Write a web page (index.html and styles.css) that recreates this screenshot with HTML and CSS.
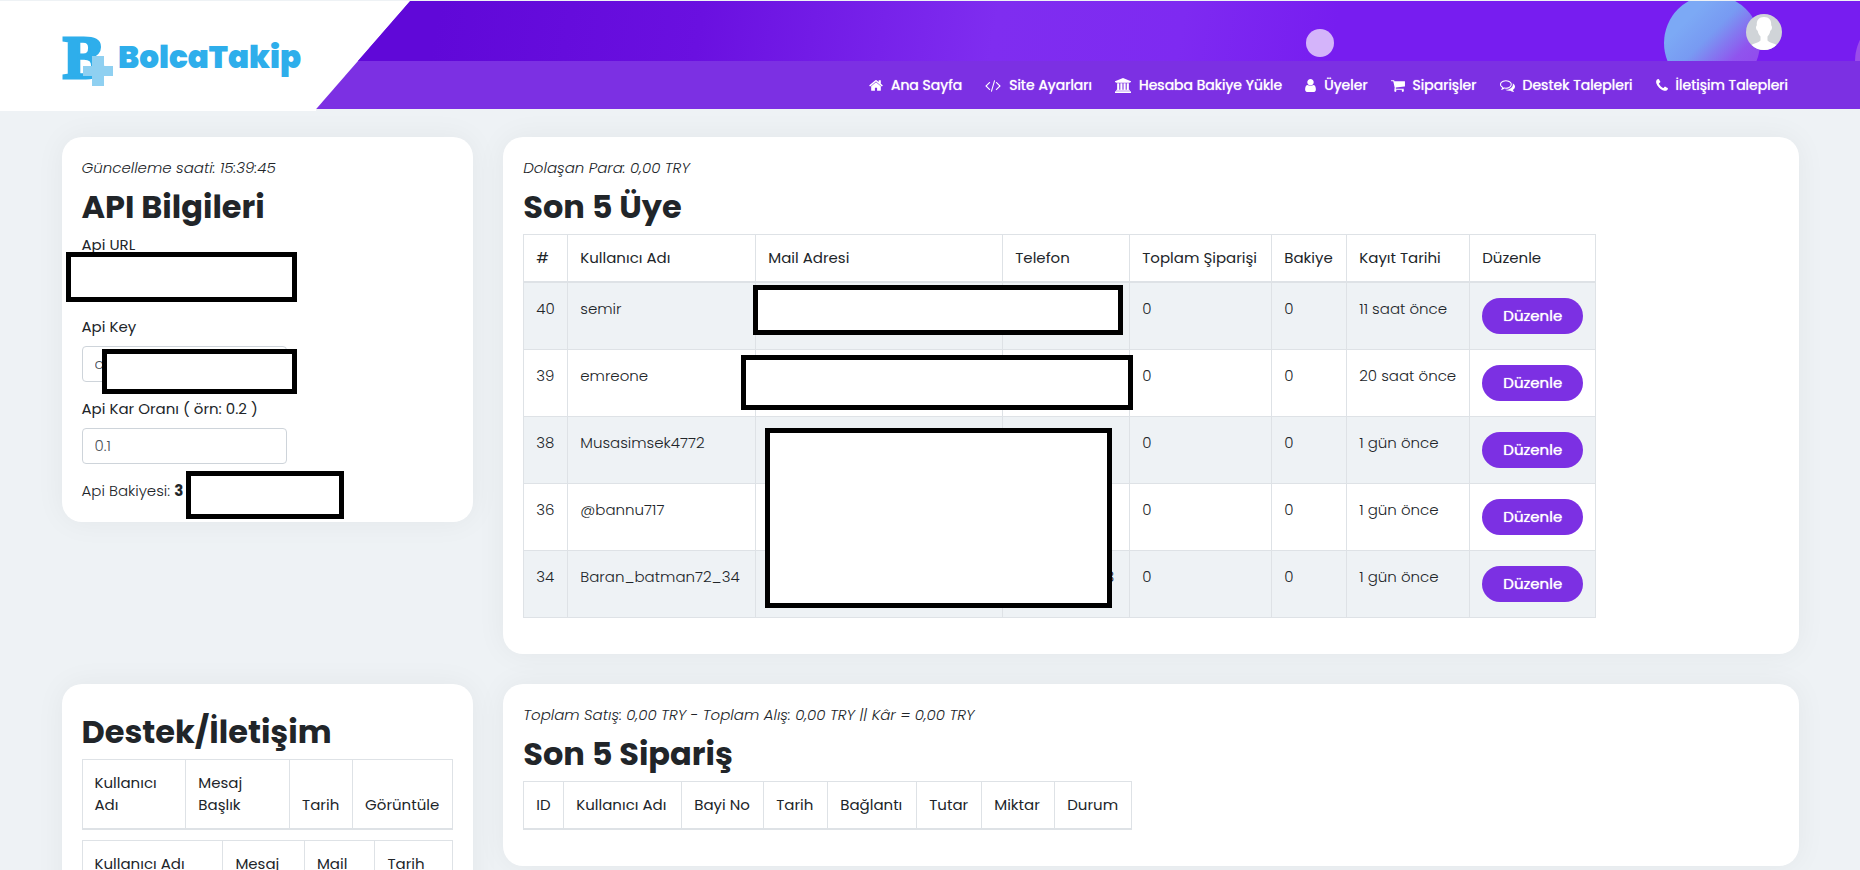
FILE: index.html
```html
<!DOCTYPE html>
<html lang="tr">
<head>
  <meta charset="UTF-8">
  <meta name="viewport" content="width=device-width, initial-scale=1.0">
  <title>BolcaTakip</title>
  <link rel="stylesheet" href="styles.css">
</head>
<body>

  <!-- Header -->
  <header class="header">
    <a class="logo" href="#">
      <svg class="logo-mark" viewBox="0 0 52 52" width="52" height="52" aria-hidden="true">
        <text class="logo-letter" x="1" y="43">B</text>
        <path fill="#8fd0f1" d="M30 21h12v10h9v10h-9v10h-12v-10h-9v-10h9z"/>
      </svg>
      <span class="logo-text">BolcaTakip</span>
    </a>

    <div class="header-right">
      <div class="banner">
        <span class="bubble bubble-small"></span>
        <span class="bubble bubble-big"></span>
        <span class="bubble bubble-edge"></span>
        <a class="avatar" href="#" aria-label="Profil">
          <svg viewBox="0 0 36 36" width="36" height="36">
            <rect width="36" height="36" fill="#d0d4d8"/>
            <path fill="#fff" d="M18 3c-5 0-7.500 3-7.200 8 0 1-.8 1-.8 2.500s.7 3 1.700 3.300c.4 2.500 1.300 4.200 2.800 5.700v4c-2 2.500-6.500 2-10 5.500v4h27v-4c-3.500-3.500-8-3-10-5.500v-4c1.500-1.500 2.400-3.200 2.800-5.700 1-.3 1.700-1.800 1.700-3.300s-.8-1.500-.8-2.500c.3-5-2.200-8-7.200-8z"/>
          </svg>
        </a>
      </div>

      <nav class="menu">
        <a href="#"><svg viewBox="64 0 1664 1792" width="14" height="15"><path d="M1472 992v480q0 26-19 45t-45 19h-384v-384h-256v384h-384q-26 0-45-19t-19-45v-480q0-1 .5-3t.5-3l575-474 575 474q1 2 1 6zm223-69l-62 74q-8 9-21 11h-3q-13 0-21-7l-692-577-692 577q-12 8-24 7-13-2-21-11l-62-74q-8-10-7-23.500t11-21.500l719-599q32-26 76-26t76 26l244 204v-195q0-14 9-23t23-9h192q14 0 23 9t9 23v408l219 182q10 8 11 21.500t-7 23.500z"/></svg>Ana Sayfa</a>
        <a href="#"><svg viewBox="-64 0 1920 1792" width="16" height="15"><path d="M553 1399l-50 50q-10 10-23 10t-23-10l-466-466q-10-10-10-23t10-23l466-466q10-10 23-10t23 10l50 50q10 10 10 23t-10 23l-393 393 393 393q10 10 10 23t-10 23zm591-1067l-373 1291q-4 13-15.500 19.500t-23.500 2.500l-62-17q-13-4-19.500-15.500t-2.500-24.500l373-1291q4-13 15.500-19.500t23.500-2.500l62 17q13 4 19.500 15.500t2.500 24.500zm657 651l-466 466q-10 10-23 10t-23-10l-50-50q-10-10-10-23t10-23l393-393-393-393q-10-10-10-23t10-23l50-50q10-10 23-10t23 10l466 466q10 10 10 23t-10 23z"/></svg>Site Ayarları</a>
        <a href="#"><svg viewBox="0 0 1920 1792" width="16" height="15"><path d="M960 0l960 384v128h-128q0 26-20.500 45t-48.500 19h-1526q-28 0-48.500-19t-20.500-45h-128v-128zm-704 640h256v768h128v-768h256v768h128v-768h256v768h128v-768h256v768h59q28 0 48.500 19t20.500 45v64h-1664v-64q0-26 20.500-45t48.500-19h59v-768zm1595 960q28 0 48.500 19t20.500 45v128h-1920v-128q0-26 20.500-45t48.500-19h1782z"/></svg>Hesaba Bakiye Yükle</a>
        <a href="#"><svg viewBox="256 0 1280 1792" width="11" height="15"><path d="M1536 1399q0 109-62.500 187t-150.500 78h-854q-88 0-150.500-78t-62.500-187q0-85 8.500-160.500t31.500-152 58.500-131 94-89 134.500-34.500q131 128 313 128t313-128q76 0 134.500 34.500t94 89 58.500 131 31.500 152 8.500 160.500zm-256-887q0 159-112.500 271.500t-271.500 112.500-271.500-112.500-112.500-271.500 112.500-271.500 271.500-112.500 271.500 112.500 112.500 271.500z"/></svg>Üyeler</a>
        <a href="#"><svg viewBox="64 0 1664 1792" width="14" height="15"><path d="M704 1536q0 52-38 90t-90 38-90-38-38-90 38-90 90-38 90 38 38 90zm896 0q0 52-38 90t-90 38-90-38-38-90 38-90 90-38 90 38 38 90zm128-1088v512q0 24-16.500 42.500t-40.500 21.500l-1044 122q13 60 13 70 0 16-24 64h920q26 0 45 19t19 45-19 45-45 19h-1024q-26 0-45-19t-19-45q0-11 8-31.500t16-36 21.500-40 15.500-29.500l-177-823h-204q-26 0-45-19t-19-45 19-45 45-19h256q16 0 28.500 6.500t19.500 15.500 13 24.500 8 26 5.500 29.500 4.500 26h1201q26 0 45 19t19 45z"/></svg>Siparişler</a>
        <a href="#"><svg viewBox="0 0 1792 1792" width="15" height="15"><path d="M704 384q-153 0-286 52t-211.500 141-78.500 191q0 82 53 158t149 132l97 56-35 84q34-20 62-39l44-31 53 10q78 14 153 14 153 0 286-52t211.500-141 78.500-191-78.500-191-211.500-141-286-52zm0-128q191 0 353.500 68.500t256.500 186.500 94 257-94 257-256.500 186.500-353.500 68.500q-86 0-176-16-124 88-278 128-36 9-86 16h-3q-11 0-20.500-8t-11.500-21q-1-3-1-6.500t.5-6.500 2-6l2.500-5 3.500-5.500 4-5 4.500-5 4-4.500q5-6 23-25t26-29.500 22.500-29 25-38.500 20.500-44q-124-72-195-177t-71-224q0-139 94-257t256.500-186.500 353.500-68.500zm822 1169q10 24 20.500 44t25 38.500 22.500 29 26 29.500 23 25q1 1 4 4.500t4.500 5 4 5 3.500 5.500l2.500 5 2 6 .5 6.500-1 6.500q-3 14-13 22t-22 7q-50-7-86-16-154-40-278-128-90 16-176 16-271 0-472-132 58 4 88 4 161 0 309-45t264-129q125-92 192-212t67-254q0-77-23-152 129 71 204 178t75 230q0 120-71 224.500t-195 176.500z"/></svg>Destek Talepleri</a>
        <a href="#"><svg viewBox="192 0 1408 1792" width="12" height="15"><path d="M1600 1240q0 27-10 70.500t-21 68.500q-21 50-122 106-94 51-186 51-27 0-53-3.500t-57.500-12.500-47-14.500-55.500-20.500-49-18q-98-35-175-83-127-79-264-216t-216-264q-48-77-83-175-3-9-18-49t-20.500-55.500-14.500-47-12.500-57.500-3.500-53q0-92 51-186 56-101 106-122 25-11 68.500-21t70.500-10q14 0 21 3 18 6 53 76 11 19 30 54t35 63.500 31 53.500q3 4 17.500 25t21.500 35.500 7 28.500q0 20-28.500 50t-62 55-62 53-28.500 46q0 9 5 22.500t8.500 20.500 14 24 11.500 19q76 137 174 235t235 174q2 1 19 11.500t24 14 20.500 8.500 22.500 5q18 0 46-28.500t53-62 55-62 50-28.500q14 0 28.500 7t35.500 21.500 25 17.500q25 15 53.500 31t63.500 35 54 30q70 35 76 53 3 7 3 21z"/></svg>İletişim Talepleri</a>
      </nav>
    </div>
  </header>

  <main class="container">
    <div class="row">
      <!-- API settings -->
      <div class="col-side">
        <section class="card">
          <i class="note">Güncelleme saati: 15:39:45</i>
          <h2>API Bilgileri</h2>
          <form class="api-form">
            <label for="apiUrl">Api URL</label>
            <input type="text" id="apiUrl">
            <label for="apiKey">Api Key</label>
            <input type="text" id="apiKey" value="c">
            <label for="apiRate">Api Kar Oranı ( örn: 0.2 )</label>
            <input type="text" id="apiRate" value="0.1">
          </form>
          <div class="balance">Api Bakiyesi: <b>3</b></div>
          <span class="mask mask-url"></span>
          <span class="mask mask-key"></span>
          <span class="mask mask-balance"></span>
        </section>
      </div>

      <!-- Last members -->
      <div class="col-main">
        <section class="card">
          <i class="note">Dolaşan Para: 0,00 TRY</i>
          <h2>Son 5 Üye</h2>
          <table class="table members">
            <colgroup>
              <col class="w-id"><col class="w-user"><col class="w-mail"><col class="w-phone"><col class="w-orders"><col class="w-balance"><col class="w-date"><col class="w-edit">
            </colgroup>
            <thead>
              <tr><th>#</th><th>Kullanıcı Adı</th><th>Mail Adresi</th><th>Telefon</th><th>Toplam Şiparişi</th><th>Bakiye</th><th>Kayıt Tarihi</th><th>Düzenle</th></tr>
            </thead>
            <tbody>
              <tr><td>40</td><td>semir</td><td></td><td class="phone"></td><td>0</td><td>0</td><td>11 saat önce</td><td><button class="btn" type="button">Düzenle</button></td></tr>
              <tr><td>39</td><td>emreone</td><td></td><td class="phone"></td><td>0</td><td>0</td><td>20 saat önce</td><td><button class="btn" type="button">Düzenle</button></td></tr>
              <tr><td>38</td><td>Musasimsek4772</td><td></td><td class="phone"></td><td>0</td><td>0</td><td>1 gün önce</td><td><button class="btn" type="button">Düzenle</button></td></tr>
              <tr><td>36</td><td>@bannu717</td><td></td><td class="phone"></td><td>0</td><td>0</td><td>1 gün önce</td><td><button class="btn" type="button">Düzenle</button></td></tr>
              <tr><td>34</td><td>Baran_batman72_34</td><td></td><td class="phone">3</td><td>0</td><td>0</td><td>1 gün önce</td><td><button class="btn" type="button">Düzenle</button></td></tr>
            </tbody>
          </table>
          <span class="mask mask-row1"></span>
          <span class="mask mask-row2"></span>
          <span class="mask mask-rows"></span>
        </section>
      </div>
    </div>

    <div class="row">
      <!-- Support messages -->
      <div class="col-side">
        <section class="card">
          <h2>Destek/İletişim</h2>
          <table class="table support">
            <colgroup>
              <col class="w-s1"><col class="w-s2"><col class="w-s3"><col class="w-s4">
            </colgroup>
            <thead>
              <tr><th>Kullanıcı Adı</th><th>Mesaj Başlık</th><th>Tarih</th><th>Görüntüle</th></tr>
            </thead>
          </table>
          <table class="table support">
            <colgroup>
              <col class="w-c1"><col class="w-c2"><col class="w-c3"><col class="w-c4">
            </colgroup>
            <thead>
              <tr><th>Kullanıcı Adı</th><th>Mesaj</th><th>Mail</th><th>Tarih</th></tr>
            </thead>
          </table>
        </section>
      </div>

      <!-- Last orders -->
      <div class="col-main">
        <section class="card">
          <i class="note">Toplam Satış: 0,00 TRY - Toplam Alış: 0,00 TRY || Kâr = 0,00 TRY</i>
          <h2>Son 5 Sipariş</h2>
          <table class="table orders">
            <colgroup>
              <col class="w-o1"><col class="w-o2"><col class="w-o3"><col class="w-o4"><col class="w-o5"><col class="w-o6"><col class="w-o7"><col class="w-o8">
            </colgroup>
            <thead>
              <tr><th>ID</th><th>Kullanıcı Adı</th><th>Bayi No</th><th>Tarih</th><th>Bağlantı</th><th>Tutar</th><th>Miktar</th><th>Durum</th></tr>
            </thead>
          </table>
        </section>
      </div>
    </div>
  </main>

</body>
</html>
```
FILE: styles.css
```css
* {
  box-sizing: border-box;
}

body {
  margin: 0;
  padding-top: 1px;
  background: #eef2f5;
  color: #212529;
  font-family: Poppins, Inter, sans-serif;
  font-size: 15px;
  font-weight: 300;
  line-height: 22px;
}

/* Header */
.header {
  display: flex;
  align-items: flex-start;
  height: 108px;
  background: #fff;
}

.logo {
  display: flex;
  align-items: center;
  gap: 4px;
  width: 17%;
  height: 110px;
  padding: 10px 0 0 62px;
  background: #fff;
  color: #2eaeeb;
  text-decoration: none;
}

.logo-mark {
  flex: none;
  overflow: visible;
}

.logo-letter {
  fill: #2eaeeb;
  stroke: #2eaeeb;
  stroke-width: 3px;
  font-family: "Liberation Serif", serif;
  font-size: 62px;
  font-weight: 700;
}

.logo-text {
  font-size: 31px;
  font-weight: 900;
  line-height: 40px;
  margin-bottom: 8px;
}

.header-right {
  flex: 1;
  background: #7c30e3;
  clip-path: polygon(94px 0, 100% 0, 100% 100%, 0 100%);
}

.banner {
  position: relative;
  display: flex;
  justify-content: flex-end;
  height: 60px;
  padding: 13px 78px 0 0;
  overflow: hidden;
  background: linear-gradient(100deg, #6008d8 8%, #6a10e0 25%, #7f2df0 44%, #7e2af1 56%, #771df0 66%, #771df0 100%);
}

.bubble {
  position: absolute;
  border-radius: 50%;
}

.bubble-small {
  top: 28px;
  right: 526px;
  width: 28px;
  height: 28px;
  background: #d4b4fa;
}

.bubble-big {
  top: -6px;
  right: 100px;
  width: 96px;
  height: 96px;
  background: linear-gradient(135deg, #7ca9f5 25%, #789af2 45%, #9054ee 70%, #9440ea 100%);
}

.bubble-edge {
  top: 12px;
  right: -91px;
  width: 96px;
  height: 96px;
  background: #9a4cea;
}

.avatar {
  position: relative;
  width: 36px;
  height: 36px;
  border-radius: 50%;
  overflow: hidden;
}

.avatar svg {
  display: block;
}

.menu {
  display: flex;
  justify-content: flex-end;
  align-items: center;
  gap: 23px;
  height: 48px;
  padding-right: 72px;
  font-size: 14px;
}

.menu a {
  display: flex;
  align-items: center;
  gap: 8px;
  color: #fff;
  font-weight: 400;
  text-decoration: none;
  text-shadow: 0 0 1px #fff;
  white-space: nowrap;
}

.menu svg {
  fill: #fff;
}

/* Layout */
.container {
  width: 95%;
  margin: 0 auto;
  padding-top: 28px;
}

.row {
  display: flex;
  align-items: flex-start;
  margin-bottom: 30px;
}

.col-side {
  width: 25%;
  padding: 0 15px;
}

.col-main {
  width: 75%;
  padding: 0 15px;
}

.card {
  position: relative;
  padding: 20px;
  border-radius: 20px;
  background: #fff;
  box-shadow: 0 0 30px rgba(0, 0, 0, 0.05);
}

.card .note {
  display: block;
}

.card h2 {
  margin: 8px 0;
  font-size: 32px;
  font-weight: 700;
  line-height: 39px;
}

/* Api form */
.api-form label {
  display: block;
  margin-bottom: 8px;
  font-weight: 400;
}

.api-form input {
  display: block;
  width: 205px;
  height: 36px;
  margin-bottom: 16px;
  padding: 5px 12px 7px;
  border: 1px solid #ced4da;
  border-radius: 4px;
  color: #495057;
  font: inherit;
}

.balance b {
  font-weight: 700;
}

/* Tables */
.table {
  border-collapse: collapse;
  margin-bottom: 16px;
}

.table th,
.table td {
  border: 1px solid #dee2e6;
  text-align: left;
}

.table th {
  padding: 12px;
  border-bottom-width: 2px;
  font-weight: 400;
  vertical-align: bottom;
}

.table td {
  height: 67px;
  padding: 15px 12px 14px;
  vertical-align: top;
}

.table tbody tr:nth-child(odd) {
  background: #eef2f5;
}

.members td.phone {
  padding-right: 15px;
  text-align: right;
}

.w-id { width: 44px; }
.w-user { width: 188px; }
.w-mail { width: 247px; }
.w-phone { width: 127px; }
.w-orders { width: 142px; }
.w-balance { width: 75px; }
.w-date { width: 123px; }
.w-edit { width: 126px; }

.support {
  width: 100%;
  margin-bottom: 10px;
}

.w-s1 { width: 28%; }
.w-s2 { width: 28%; }
.w-s3 { width: 17%; }
.w-s4 { width: 27%; }

.w-c1 { width: 38%; }
.w-c2 { width: 22%; }
.w-c3 { width: 19%; }
.w-c4 { width: 21%; }

.w-o1 { width: 40px; }
.w-o2 { width: 118px; }
.w-o3 { width: 82px; }
.w-o4 { width: 64px; }
.w-o5 { width: 89px; }
.w-o6 { width: 65px; }
.w-o7 { width: 73px; }
.w-o8 { width: 77px; }

.btn {
  width: 101px;
  height: 36px;
  border: 0;
  border-radius: 18px;
  background: #7c30e3;
  color: #fff;
  font: inherit;
  font-weight: 400;
  text-shadow: 0 0 1px #fff;
  cursor: pointer;
}

/* Boxes that cover private data */
.mask {
  position: absolute;
  border: 5px solid #000;
  background: #fff;
}

.mask-url {
  top: 115px;
  left: 4px;
  width: 231px;
  height: 50px;
}

.mask-key {
  top: 212px;
  left: 40px;
  width: 195px;
  height: 45px;
}

.mask-balance {
  top: 334px;
  left: 124px;
  width: 158px;
  height: 48px;
}

.mask-row1 {
  top: 148px;
  left: 250px;
  width: 370px;
  height: 50px;
}

.mask-row2 {
  top: 218px;
  left: 238px;
  width: 392px;
  height: 55px;
}

.mask-rows {
  top: 291px;
  left: 262px;
  width: 347px;
  height: 180px;
}
```
